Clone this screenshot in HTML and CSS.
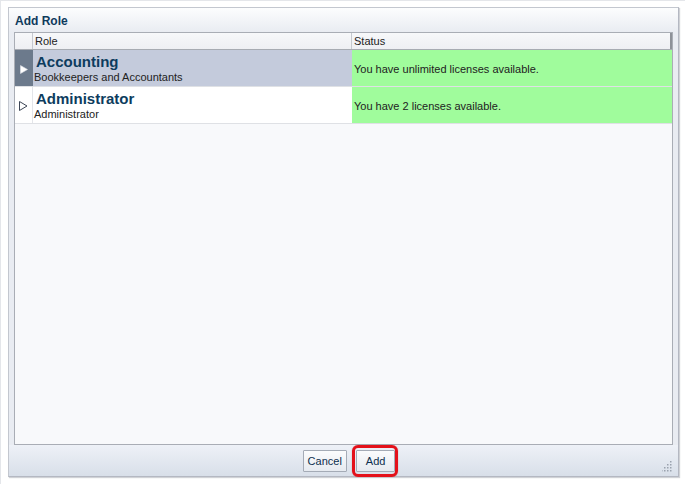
FILE: index.html
```html
<!DOCTYPE html>
<html>
<head>
<meta charset="utf-8">
<link rel="stylesheet" href="styles.css">
</head>
<body>
<div class="page">
  <div class="dialog">
    <div class="titlebar">Add Role</div>
    <div class="content">
      <div class="table">
        <div class="row header">
          <div class="sel"></div>
          <div class="role">Role</div>
          <div class="status">Status</div>
        </div>
        <div class="row item selected">
          <div class="sel"><svg width="8" height="9" viewBox="0 0 8 9"><path d="M0.5 0.5 L7.5 4.5 L0.5 8.5 Z" fill="#ffffff" stroke="#dfe3ea" stroke-width="0.6"/></svg></div>
          <div class="role"><div class="name">Accounting</div><div class="desc">Bookkeepers and Accountants</div></div>
          <div class="status green">You have unlimited licenses available.</div>
        </div>
        <div class="row item">
          <div class="sel"><svg width="9" height="10" viewBox="0 0 9 10"><path d="M0.5 0.5 L8 5 L0.5 9.5 Z" fill="#ffffff" stroke="#3d4656" stroke-width="1"/></svg></div>
          <div class="role"><div class="name">Administrator</div><div class="desc">Administrator</div></div>
          <div class="status green">You have 2 licenses available.</div>
        </div>
      </div>
    </div>
    <div class="footer">
      <button class="btn">Cancel</button>
      <span class="highlight"><button class="btn">Add</button></span>
      <svg class="grip" width="11" height="11" viewBox="0 0 11 11" fill="#9aa2ae"><rect x="8" y="0" width="1.5" height="1.5"/><rect x="5" y="3" width="1.5" height="1.5"/><rect x="8" y="3" width="1.5" height="1.5"/><rect x="2" y="6" width="1.5" height="1.5"/><rect x="5" y="6" width="1.5" height="1.5"/><rect x="8" y="6" width="1.5" height="1.5"/><rect x="-1" y="9" width="1.5" height="1.5"/><rect x="2" y="9" width="1.5" height="1.5"/><rect x="5" y="9" width="1.5" height="1.5"/><rect x="8" y="9" width="1.5" height="1.5"/></svg>
    </div>
  </div>
</div>
</body>
</html>
```
FILE: styles.css
```css
html, body {
  margin: 0;
  padding: 0;
  background: #ffffff;
}
body {
  font-family: "Liberation Sans", Arial, sans-serif;
  color: #222;
}
.page {
  width: 685px;
  height: 484px;
  box-sizing: border-box;
  padding: 6px 0 0 7px;
  border-top: 1px solid #e4e6ea;
  border-left: 1px solid #e4e6ea;
}
.dialog {
  width: 671px;
  height: 470px;
  box-sizing: border-box;
  border: 1px solid #c3c7cf;
  border-right-color: #b4b8c2;
  border-bottom-color: #b4b8c2;
  box-shadow: 1px 1px 1px rgba(150,155,165,0.45);
  background: #eef1f6;
  display: flex;
  flex-direction: column;
}
.titlebar {
  height: 24px;
  box-sizing: border-box;
  padding: 6px 0 0 6px;
  font-weight: bold;
  font-size: 12px;
  color: #0e3a5c;
  background: linear-gradient(#fcfdfe, #e9ecf2);
}
.content {
  flex: 1;
  padding: 0 5px 0 5px;
  background: #e9ecf2;
  display: flex;
}
.table {
  flex: 1;
  border: 1px solid #a9adb5;
  background: #f8f9fb;
}
.row {
  display: flex;
}
.row > div {
  box-sizing: border-box;
}
.header {
  height: 16px;
  background: linear-gradient(#f7f8fa, #eeeff3);
  border-bottom: 1px solid #a7abb2;
  font-size: 11px;
  color: #222;
}
.header .sel,
.header .role {
  border-right: 1px solid #c6c9cf;
}
.header .role,
.header .status {
  padding: 2px 0 0 2px;
  line-height: 13px;
}
.sel {
  width: 18px;
  flex: none;
  display: flex;
  align-items: center;
  justify-content: center;
}
.role {
  width: 319px;
  flex: none;
  padding-left: 1px;
}
.status {
  flex: 1;
  padding-left: 2px;
}
.header .status { border-right: 2px solid #8d9198; }
.item {
  height: 37px;
  box-sizing: border-box;
  border-bottom: 1px solid #dfe1e5;
  background: #ffffff;
}
.item .sel {
  padding-top: 2px;
  border-right: 1px solid #e3e5e9;
}
.selected {
  background: #c4cbdc;
}
.selected .sel {
  background: #6c7a8c;
  border-right: 1px solid #6c7a8c;
}
.item .role {
  padding-top: 3px;
}
.name {
  font-weight: bold;
  font-size: 15px;
  line-height: 17px;
  color: #0d3c5e;
  padding-left: 2px;
}
.desc {
  font-size: 11px;
  line-height: 13px;
  color: #222;
  padding-top: 1px;
}
.status.green {
  background: #a0fc9c;
  font-size: 11px;
  display: flex;
  align-items: center;
  padding-top: 1px;
  color: #222;
}
.footer {
  height: 31px;
  flex: none;
  position: relative;
  background: linear-gradient(#eef1f7, #d8dfe9);
  display: flex;
  align-items: center;
  justify-content: center;
  padding-left: 14px;
  gap: 5px;
}
.btn {
  font-family: "Liberation Sans", Arial, sans-serif;
  font-size: 11px;
  color: #0d2f4e;
  height: 22px;
  padding: 0 4px;
  border: 1px solid #a4abb6;
  border-radius: 1px;
  background: linear-gradient(#fbfcfd, #e6eaf0);
}
.highlight {
  border: 3px solid #e4111a;
  border-radius: 6px;
  padding: 2px 0 2px 1px;
  display: flex;
  box-shadow: 0 0 1px rgba(120,0,0,0.5);
}
.highlight .btn {
  padding: 0 9px;
}
.grip {
  position: absolute;
  right: 5px;
  bottom: 4px;
}
```
